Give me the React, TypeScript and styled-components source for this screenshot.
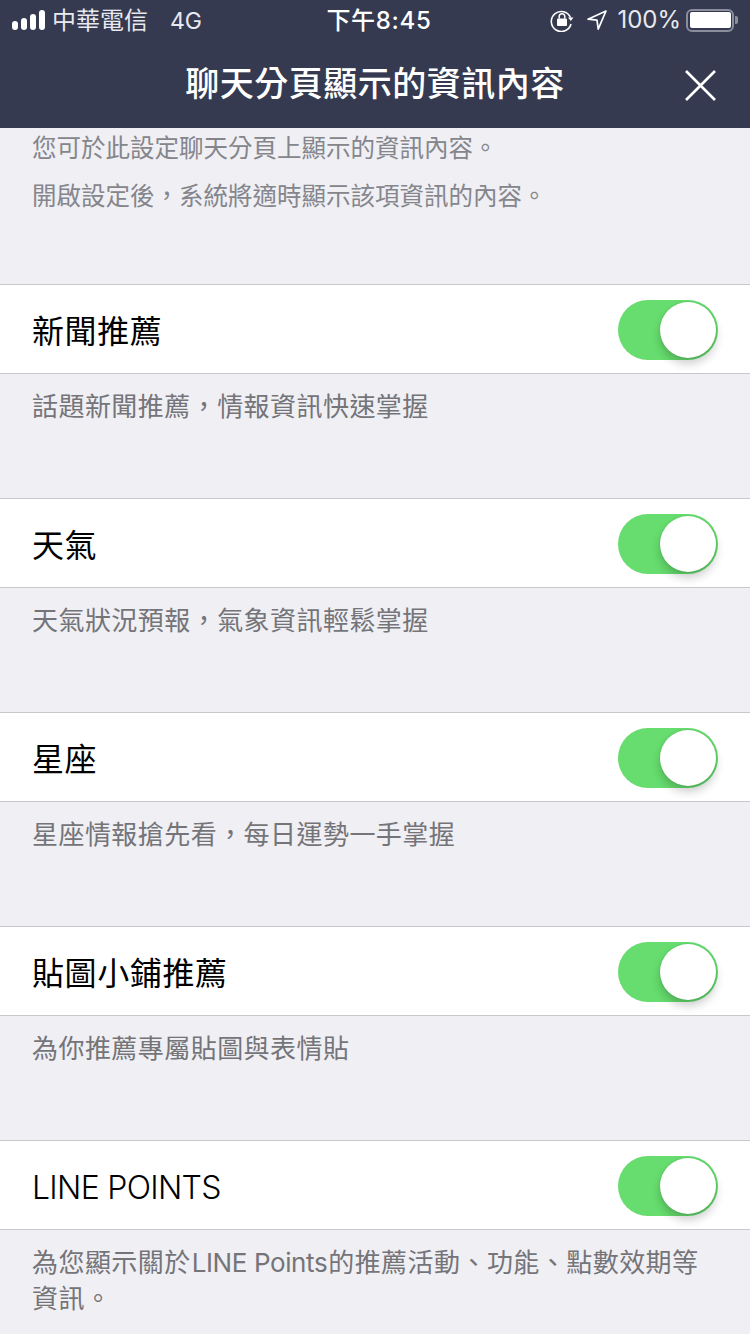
import { createGlobalStyle } from "styled-components";
import styled from "styled-components";

const App = () => (
  <Screen>
    <GlobalStyle />
    <Header>
      <StatusBar>
        <StatusLeft>
          <Signal>
            {[9, 12, 16, 20].map((h) => (
              <SignalBar key={h} style={{ height: h }} />
            ))}
          </Signal>
          <Carrier>中華電信</Carrier>
          <Network>4G</Network>
        </StatusLeft>
        <Clock>下午8:45</Clock>
        <StatusRight>
          <svg width="24" height="24" viewBox="0 0 24 24" fill="none">
            <path d="M20.5 9.5A10 10 0 1 0 21 16" stroke="#fff" strokeWidth="1.6" />
            <path d="M18 9.5h5.5l-2.7 3.4z" fill="#fff" />
            <rect x="7" y="10.5" width="10" height="7.5" rx="1" fill="#fff" />
            <path d="M9.2 10.5V8.6a2.8 2.8 0 0 1 5.6 0v1.9" stroke="#fff" strokeWidth="1.5" />
          </svg>
          <svg width="22" height="22" viewBox="0 0 22 22" fill="none">
            <path d="M20 2 2 10.2l9 1 1.2 9z" stroke="#fff" strokeWidth="1.7" strokeLinejoin="round" />
          </svg>
          <Percent>100%</Percent>
          <Battery>
            <BatteryFill />
          </Battery>
          <BatteryCap />
        </StatusRight>
      </StatusBar>
      <TitleBar>
        <Title>聊天分頁顯示的資訊內容</Title>
        <CloseButton>
          <svg width="31" height="31" viewBox="0 0 31 31" fill="none">
            <path d="M1 1l29 29M30 1 1 30" stroke="#fff" strokeWidth="2.6" />
          </svg>
        </CloseButton>
      </TitleBar>
    </Header>
    <Intro>
      <IntroLine>您可於此設定聊天分頁上顯示的資訊內容。</IntroLine>
      <IntroLine>開啟設定後，系統將適時顯示該項資訊的內容。</IntroLine>
    </Intro>
    {sections.map((s) => (
      <Section key={s.title}>
        <Row>
          <RowTitle $latin={s.latin}>{s.title}</RowTitle>
          <Toggle>
            <Knob />
          </Toggle>
        </Row>
        <Desc>{s.desc}</Desc>
      </Section>
    ))}
  </Screen>
);

const GlobalStyle = createGlobalStyle`
  html, body {
    margin: 0;
    height: 1334px;
    overflow: hidden;
    background: #efeff4;
  }
`;

const Screen = styled.div`
  width: 750px;
  height: 1334px;
  overflow: hidden;
  background: #efeff4;
  font-family: Inter, "Noto Sans CJK TC", "Noto Sans", sans-serif;
`;

const Header = styled.header`
  height: 128px;
  background: #353a50;
  color: #fff;
`;

const StatusBar = styled.div`
  display: grid;
  grid-template-columns: 1fr auto 1fr;
  align-items: center;
  height: 40px;
  padding: 0 12px 0 12px;
`;

const StatusLeft = styled.div`
  display: flex;
  align-items: center;
`;

const Signal = styled.div`
  display: flex;
  align-items: flex-end;
  gap: 3px;
  width: 33px;
`;

const SignalBar = styled.span`
  width: 6px;
  border-radius: 3px;
  background: #fff;
`;

const Carrier = styled.span`
  margin: 2px 0 0 7px;
  font-size: 24px;
  line-height: 38px;
  color: #e8e9ee;
`;

const Network = styled.span`
  margin: 2px 0 0 22px;
  font-size: 23px;
  line-height: 38px;
  color: #e8e9ee;
`;

const Clock = styled.span`
  position: relative;
  left: 4px;
  margin-top: 2px;
  font-size: 24px;
  font-weight: 500;
  line-height: 38px;
  letter-spacing: 0.7px;
`;

const StatusRight = styled.div`
  display: flex;
  align-items: center;
  justify-content: flex-end;
  gap: 12px;
`;

const Percent = styled.span`
  font-size: 24px;
  line-height: 40px;
  margin-left: -3px;
  color: #e8e9ee;
`;

const Battery = styled.div`
  box-sizing: border-box;
  width: 48px;
  height: 23px;
  margin-left: -7px;
  padding: 1.5px;
  border: 2px solid #8a8d9c;
  border-radius: 6px;
`;

const BatteryFill = styled.div`
  height: 100%;
  border-radius: 2px;
  background: #fff;
`;

const BatteryCap = styled.div`
  width: 3px;
  height: 8px;
  margin-left: -11px;
  border-radius: 0 2px 2px 0;
  background: #8a8d9c;
`;

const TitleBar = styled.div`
  position: relative;
  display: flex;
  align-items: center;
  justify-content: center;
  height: 88px;
`;

const Title = styled.h1`
  margin: 0;
  font-size: 34px;
  font-weight: 500;
  line-height: 88px;
  letter-spacing: 0.5px;
  color: #fff;
`;

const CloseButton = styled.div`
  position: absolute;
  right: 34px;
  top: 30px;
  display: flex;
`;

const Intro = styled.div`
  height: 155px;
  padding: 1px 32px 0;
`;

const IntroLine = styled.p`
  margin: 0 0 10px;
  font-size: 24.5px;
  line-height: 38px;
  color: #85858c;
`;

const Section = styled.section`
  height: 214px;
`;

const Row = styled.div`
  box-sizing: border-box;
  display: flex;
  align-items: center;
  justify-content: space-between;
  height: 90px;
  padding: 1px 32px 0;
  background: #fff;
  border-top: 1px solid #c8c7cc;
  border-bottom: 1px solid #c8c7cc;
`;

const RowTitle = styled.span<{ $latin?: boolean }>`
  margin-top: 4px;
  font-size: 32px;
  line-height: 44px;
  font-weight: ${({ $latin }) => ($latin ? 300 : 400)};
  letter-spacing: ${({ $latin }) => ($latin ? "-0.7px" : "0.6px")};
  color: #000;
`;

const Toggle = styled.div`
  position: relative;
  width: 100px;
  height: 60px;
  border-radius: 30px;
  background: #66dd6e;
`;

const Knob = styled.span`
  position: absolute;
  top: 2px;
  right: 2px;
  width: 56px;
  height: 56px;
  border-radius: 50%;
  background: #fff;
  box-shadow: 0 6px 10px rgba(0, 0, 0, 0.2), 0 0 2px rgba(0, 0, 0, 0.15);
`;

const Desc = styled.p`
  margin: 0;
  padding: 15px 32px 0;
  font-size: 26px;
  line-height: 36px;
  letter-spacing: 0.45px;
  color: #747479;
`;

const Latin = styled.span`
  margin: 0 1px;
  letter-spacing: -0.4px;
`;

const sections: { title: string; desc: React.ReactNode; latin?: boolean }[] = [
  { title: "新聞推薦", desc: "話題新聞推薦，情報資訊快速掌握" },
  { title: "天氣", desc: "天氣狀況預報，氣象資訊輕鬆掌握" },
  { title: "星座", desc: "星座情報搶先看，每日運勢一手掌握" },
  { title: "貼圖小鋪推薦", desc: "為你推薦專屬貼圖與表情貼" },
  {
    title: "LINE POINTS",
    desc: (
      <>
        為您顯示關於<Latin>LINE Points</Latin>的推薦活動、功能、點數效期等資訊。
      </>
    ),
    latin: true,
  },
];

export default App;
